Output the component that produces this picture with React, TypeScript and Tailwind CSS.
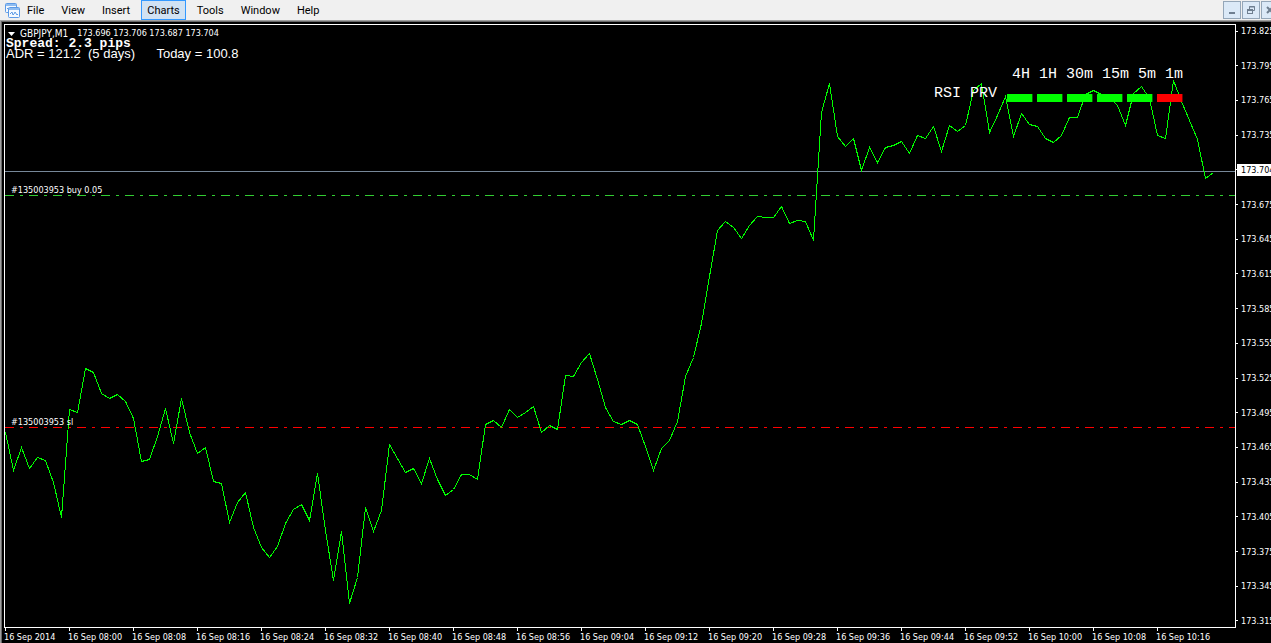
import type { ReactNode } from 'react';

const BAR_WIDTH = 8;

// One close per minute bar, measured down from the top of the plot.
const closes = [
  407, 445, 422, 443, 432, 435, 457, 492, 384, 387, 343, 347, 368, 373, 369, 376, 393, 436, 434, 411,
  383, 418, 373, 407, 428, 422, 456, 458, 497, 477, 467, 502, 522, 532, 521, 498, 484, 479, 495, 448,
  505, 555, 506, 578, 552, 482, 506, 485, 419, 433, 447, 443, 458, 433, 454, 470, 464, 449, 449, 454,
  399, 395, 402, 384, 392, 387, 381, 407, 400, 404, 350, 351, 337, 328, 354, 382, 396, 399, 395, 399,
  421, 445, 423, 415, 396, 351, 332, 298, 251, 205, 196, 202, 213, 200, 191, 192, 192, 181, 198, 195,
  196, 215, 87, 58, 111, 121, 113, 145, 122, 137, 122, 120, 116, 128, 110, 113, 101, 126, 100, 106,
  100, 65, 58, 107, 90, 71, 111, 88, 99, 101, 113, 117, 110, 92, 92, 69, 65, 69, 72, 80,
  100, 68, 61, 73, 110, 113, 55, 76, 95, 114, 153, 147,
];

const prices = [
  '173.825', '173.795', '173.765', '173.735', '173.704', '173.675', '173.645', '173.615', '173.585',
  '173.555', '173.525', '173.495', '173.465', '173.435', '173.405', '173.375', '173.345', '173.315',
];
const bid = '173.704';

const times = [
  '16 Sep 2014', '16 Sep 08:00', '16 Sep 08:08', '16 Sep 08:16', '16 Sep 08:24', '16 Sep 08:32',
  '16 Sep 08:40', '16 Sep 08:48', '16 Sep 08:56', '16 Sep 09:04', '16 Sep 09:12', '16 Sep 09:20',
  '16 Sep 09:28', '16 Sep 09:36', '16 Sep 09:44', '16 Sep 09:52', '16 Sep 10:00', '16 Sep 10:08',
  '16 Sep 10:16',
];

const menus = ['File', 'View', 'Insert', 'Charts', 'Tools', 'Window', 'Help'];

const signals = [
  { frame: '4H', up: true },
  { frame: '1H', up: true },
  { frame: '30m', up: true },
  { frame: '15m', up: true },
  { frame: '5m', up: true },
  { frame: '1m', up: false },
];

const AppIcon = () => (
  <svg width="15" height="15" viewBox="0 0 15 15" fill="none" stroke="#5c9ae6" aria-hidden="true">
    <rect x="0.5" y="0.5" width="11" height="9" rx="1" fill="#f4f9ff" />
    <path d="M1 2h10" stroke="#8fbcf0" strokeWidth="2" />
    <path d="M2 6l1-1 1 2" />
    <rect x="3.5" y="4.5" width="11" height="10" rx="1" fill="#f4f9ff" />
    <path d="M4 6h10" stroke="#8fbcf0" strokeWidth="2" />
    <path d="M5 11l2-2 1 3 1-1 1-2 2 3 1-1" />
  </svg>
);

type WindowButtonProps = { label: string; children: ReactNode };

const WindowButton = ({ label, children }: Readonly<WindowButtonProps>) => (
  <button
    type="button"
    aria-label={label}
    className="flex h-[18px] w-[18px] shrink-0 items-center justify-center border border-[#94a6b8] bg-[#dbe9f7]"
  >
    <svg width="10" height="10" viewBox="0 0 10 10" fill="none" stroke="#6f7f90" aria-hidden="true">
      {children}
    </svg>
  </button>
);

const MenuBar = () => (
  <header className="flex h-5 items-center bg-[#f0f0f0] pl-[5px] text-black">
    <AppIcon />
    <nav className="flex gap-[5px] pl-px font-['Roboto',sans-serif] text-[11px] leading-4">
      {menus.map((menu) => (
        <button
          key={menu}
          type="button"
          className={
            menu === 'Charts'
              ? 'border border-[#3399ff] bg-[#d0e2f3] px-[5px] pt-0.5'
              : 'border border-transparent px-[5px] pt-0.5'
          }
        >
          {menu}
        </button>
      ))}
    </nav>
    <div className="ml-auto flex w-12 gap-px overflow-hidden">
      <WindowButton label="Minimize">
        <path d="M2 8h6" strokeWidth="2" />
      </WindowButton>
      <WindowButton label="Restore">
        <path d="M3.5 4V1.5h5v4H7" />
        <path d="M3 2h6" />
        <rect x="1.5" y="4.5" width="5" height="4" />
        <path d="M1 5h6" strokeWidth="2" />
      </WindowButton>
      <WindowButton label="Close">
        <path d="M2 2l6 6M8 2l-6 6" strokeWidth="2" />
      </WindowButton>
    </div>
  </header>
);

const PriceChart = () => {
  const points = closes.map((y, i) => `${i * BAR_WIDTH + 0.5},${y + 0.5}`).join(' ');

  return (
    <svg
      className="block h-[602px] w-full"
      role="img"
      aria-label="GBPJPY one minute line chart"
      shapeRendering="crispEdges"
      fill="none"
    >
      <line x1="0" x2="100%" y1="146.5" y2="146.5" stroke="#778899" />
      <line x1="0" x2="100%" y1="170.5" y2="170.5" stroke="#32cd32" strokeDasharray="9 6 3 6" />
      <line x1="0" x2="100%" y1="402.5" y2="402.5" stroke="#ff0000" strokeDasharray="9 6 3 6" />
      <polyline points={points} stroke="#00ff00" />
    </svg>
  );
};

const SignalPanel = () => (
  <div className="absolute top-[42px] right-[52px] flex flex-col items-end gap-[3px] font-['Liberation_Mono',monospace] text-[15px] leading-4">
    <div className="flex gap-[9px]">
      {signals.map(({ frame }) => (
        <span key={frame}>{frame}</span>
      ))}
    </div>
    <div className="flex items-end gap-2.5">
      <span>RSI PRV</span>
      <div className="flex gap-1">
        {signals.map(({ frame, up }) => (
          <span
            key={frame}
            className={
              up
                ? 'h-2 w-[26px] border-r border-[#006000] bg-[#00ff00]'
                : 'h-2 w-[26px] border-r border-[#700000] bg-[#ff0000]'
            }
          />
        ))}
      </div>
    </div>
  </div>
);

const Overlay = () => (
  <div className="absolute top-0 left-px pt-[3px]">
    <div className="flex items-center gap-[5px] pl-0.5 leading-[11px]">
      <svg width="7" height="4" viewBox="0 0 7 4" fill="white" aria-hidden="true">
        <path d="M0 0h7L3.5 4z" />
      </svg>
      <span className="pr-1 text-[10px]">GBPJPY,M1</span>
      <span>173.696 173.706 173.687 173.704</span>
    </div>
    <p className="font-['Liberation_Mono',monospace] text-[13px] leading-[10px] font-bold">
      Spread: 2.3 pips
    </p>
    <p className="font-['Liberation_Sans',sans-serif] text-[13px] leading-[9px] whitespace-pre">
      ADR = 121.2  (5 days)      Today = 100.8
    </p>
  </div>
);

const App = () => (
  <div className="flex min-h-screen flex-col overflow-hidden bg-black text-white">
    <MenuBar />
    <main className="flex-1 border-t border-l border-[#a0a0a0] font-['DejaVu_Sans_Condensed','DejaVu_Sans',sans-serif] text-[9px]">
      <div className="border-t border-l border-[#696969] pt-0.5 pl-0.5">
        <div className="flex">
          <div className="relative min-w-0 flex-1 border border-white">
            <PriceChart />
            <Overlay />
            <SignalPanel />
            <span className="absolute top-[159px] left-1.5 leading-3">#135003953 buy 0.05</span>
            <span className="absolute top-[391px] left-1.5 leading-3">#135003953 sl</span>
          </div>
          <ul className="flex w-[35px] flex-col justify-between overflow-hidden py-px leading-3">
            {prices.map((price) => (
              <li key={price} className="flex items-center">
                <span className="h-px w-0.5 shrink-0 bg-white" />
                <span className={price === bid ? '-ml-px bg-white pl-1 text-black' : 'pl-[3px]'}>
                  {price}
                </span>
              </li>
            ))}
          </ul>
        </div>
        <ul className="flex overflow-hidden pl-px">
          {times.map((time) => (
            <li key={time} className="w-16 shrink-0 leading-3 whitespace-nowrap">
              <span className="block h-[3px] w-px bg-white" />
              <span className="-ml-px block">{time}</span>
            </li>
          ))}
        </ul>
      </div>
    </main>
  </div>
);

export default App;
